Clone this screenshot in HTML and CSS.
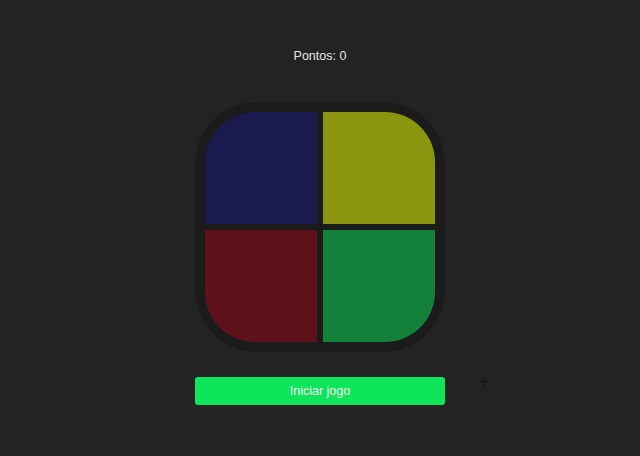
FILE: index.html
```html
<!DOCTYPE html>
<html lang="pt">
<head>
<meta charset="utf-8">
<title>Genius</title>
<link rel="stylesheet" href="styles.css">
</head>
<body>
<main class="game">
  <p class="score">Pontos: 0</p>
  <div class="board">
    <div class="pad pad-blue"></div>
    <div class="pad pad-yellow"></div>
    <div class="pad pad-red"></div>
    <div class="pad pad-green"></div>
  </div>
  <button class="start">Iniciar jogo</button>
</main>
<span class="cursor">+</span>
</body>
</html>
```
FILE: styles.css
```css
html, body {
  margin: 0;
  height: 100%;
}
body {
  background: #232323;
  font-family: "Liberation Sans", Arial, sans-serif;
  position: relative;
  overflow: hidden;
}
.game {
  display: flex;
  flex-direction: column;
  align-items: center;
  padding-top: 48px;
}
.score {
  margin: 0;
  color: #e6e6e6;
  font-size: 12.5px;
  line-height: 16px;
}
.board {
  margin-top: 38px;
  width: 250px;
  height: 250px;
  box-sizing: border-box;
  padding: 10px;
  background: #1b1b1b;
  border-radius: 62px;
  display: grid;
  grid-template-columns: 1fr 1fr;
  grid-template-rows: 1fr 1fr;
  gap: 6px;
}
.pad-blue {
  background: #1a1a4e;
  border-top-left-radius: 50px;
}
.pad-yellow {
  background: #8a9510;
  border-top-right-radius: 50px;
}
.pad-red {
  background: #5f111b;
  border-bottom-left-radius: 50px;
}
.pad-green {
  background: #14813a;
  border-bottom-right-radius: 50px;
}
.start {
  margin-top: 25px;
  width: 250px;
  height: 28px;
  border: none;
  border-radius: 3px;
  background: #0fe55a;
  color: #f2f2f2;
  font-family: "Liberation Sans", Arial, sans-serif;
  font-size: 12.5px;
}
.cursor {
  position: absolute;
  left: 479px;
  top: 375px;
  color: #151515;
  font-size: 12px;
  font-weight: bold;
  font-family: "DejaVu Sans", sans-serif;
}
```
